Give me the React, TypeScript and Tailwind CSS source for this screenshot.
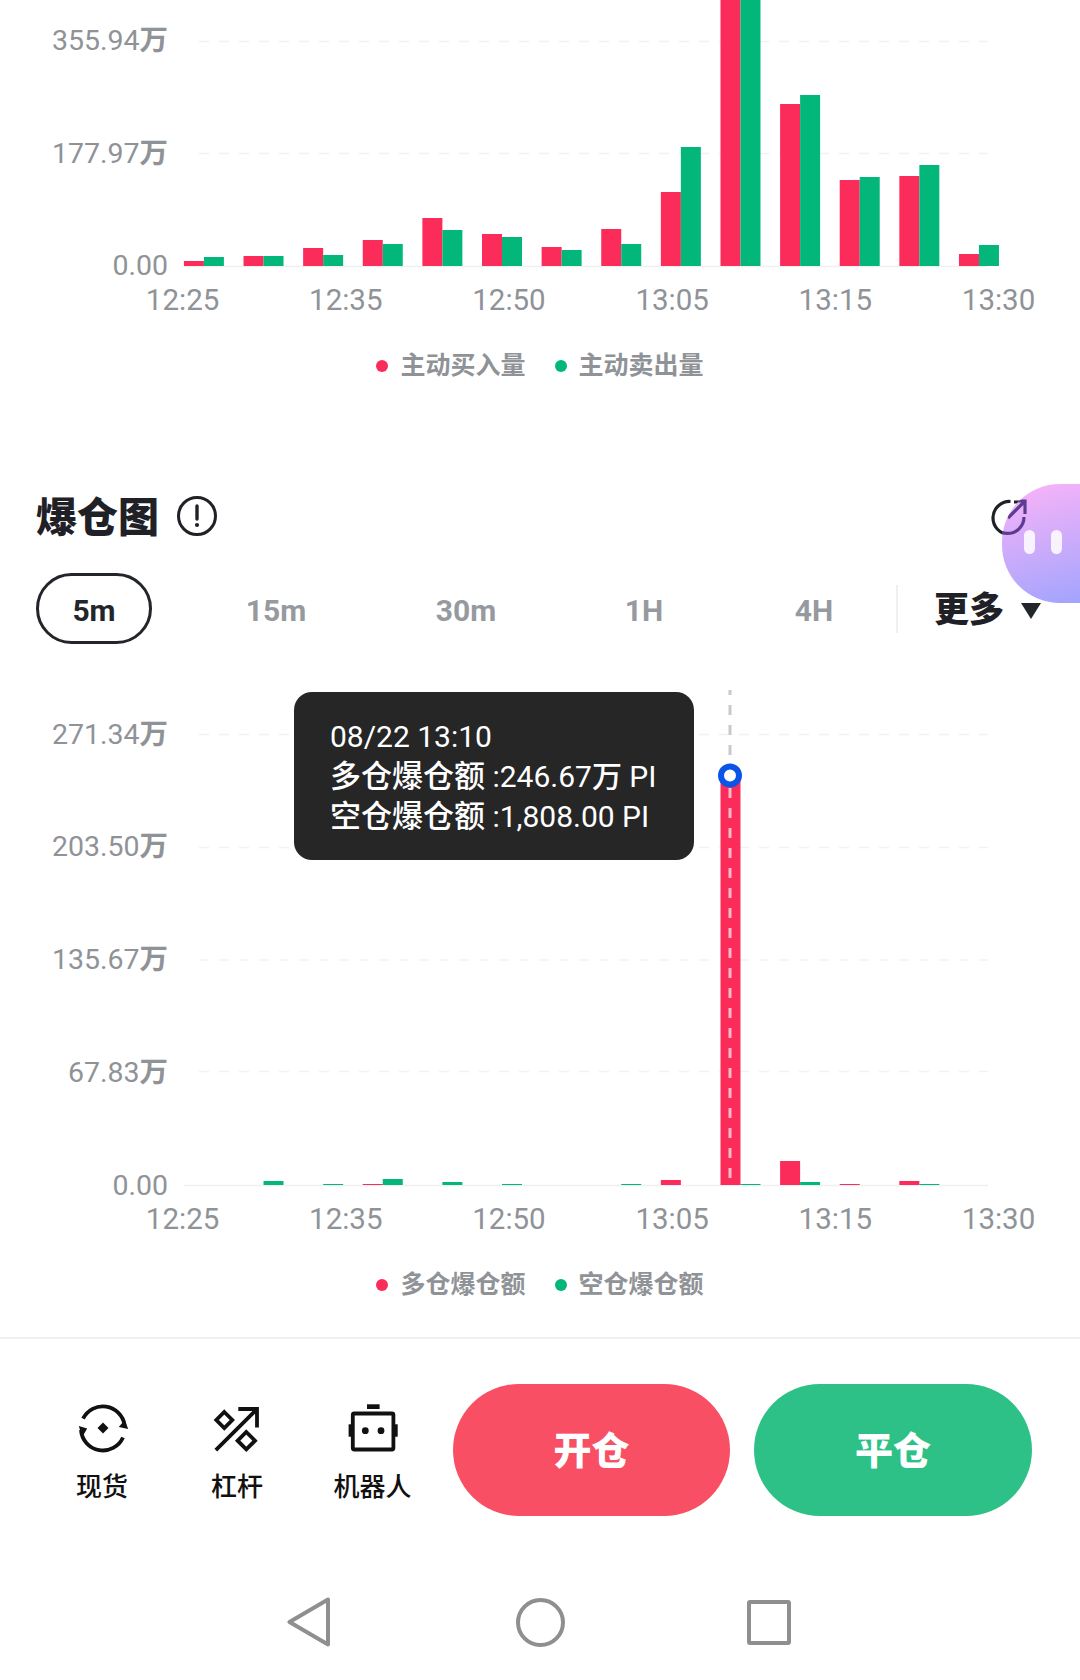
import { Fragment } from 'react';

const RED = '#fb2c5a';
const GREEN = '#03b77b';
const BAR_WIDTH = 20;
const BAR_STEP = 59.62;
const TIME_LABELS = ['12:25', '12:35', '12:50', '13:05', '13:15', '13:30'];

// bar heights in px: [buy, sell]
const VOLUME_BARS = [
  [5, 9], [10, 10], [18, 11], [26, 22], [48, 36], [32, 29], [19, 16],
  [37, 22], [74, 119], [270, 270], [162, 171], [86, 89], [90, 101], [12, 21],
];
const LIQ_BARS = [
  [0, 0], [0, 4], [0, 1], [1, 6], [0, 3], [0, 1], [0, 0],
  [0, 1], [5, 0], [405, 1], [24, 3], [1, 0], [4, 1], [0, 0],
];

const Bars = ({ data, base }: { data: number[][]; base: number }) => (
  <>
    {data.map(([buy, sell], i) => {
      const x = 183.9 + BAR_STEP * i;
      return (
        <Fragment key={i}>
          {buy > 0 && <rect x={x} y={base - buy} width={BAR_WIDTH} height={buy} fill={RED} />}
          {sell > 0 && <rect x={x + BAR_WIDTH} y={base - sell} width={BAR_WIDTH} height={sell} fill={GREEN} />}
        </Fragment>
      );
    })}
  </>
);

const GridLine = ({ y }: { y: number }) => (
  <line x1={199} x2={988} y1={y} y2={y} stroke="#f1f2f4" strokeWidth={1.5} strokeDasharray="10 10" />
);

const YLabel = ({ value, unit }: { value: string; unit?: string }) => (
  <div className="h-[32px] leading-[32px] text-[28.5px] text-right text-[#8f9397] whitespace-nowrap">
    {value}
    {unit && <span className="font-semibold">{unit}</span>}
  </div>
);

const TimeAxis = () => (
  <div className="flex pl-[101px] pt-[1px]">
    {TIME_LABELS.map((t) => (
      <div key={t} className="w-[163.2px] shrink-0 h-[32px] leading-[32px] text-center text-[29.5px] text-[#8f9397]">
        {t}
      </div>
    ))}
  </div>
);

const Legend = ({ buy, sell, className }: { buy: string; sell: string; className: string }) => (
  <div className={`flex justify-center gap-[29px] ${className}`}>
    <div className="flex items-center gap-[12px]">
      <span className="w-[12px] h-[12px] rounded-full bg-[#fb2c5a]" />
      <span className="text-[25px] leading-[32px] font-semibold text-[#8f9397]">{buy}</span>
    </div>
    <div className="flex items-center gap-[12px]">
      <span className="w-[12px] h-[12px] rounded-full bg-[#03b77b]" />
      <span className="text-[25px] leading-[32px] font-semibold text-[#8f9397]">{sell}</span>
    </div>
  </div>
);

const VolumeChart = () => (
  <div>
    <div className="flex h-[283px]">
      <div className="w-[168px] pt-[25px] flex flex-col gap-[80.5px] shrink-0">
        <YLabel value="355.94" unit="万" />
        <YLabel value="177.97" unit="万" />
        <YLabel value="0.00" />
      </div>
      <svg width={912} height={283} viewBox="168 0 912 283" className="shrink-0">
        <GridLine y={41.5} />
        <GridLine y={153.5} />
        <line x1={184} x2={988} y1={266.5} y2={266.5} stroke="#eef0f2" strokeWidth={1.5} />
        <Bars data={VOLUME_BARS} base={266} />
      </svg>
    </div>
    <TimeAxis />
    <Legend buy="主动买入量" sell="主动卖出量" className="mt-[34px]" />
  </div>
);

const LiquidationChart = () => (
  <div>
    <div className="relative flex h-[558px]">
      <div className="w-[168px] pt-[74.5px] flex flex-col gap-[80.75px] shrink-0">
        <YLabel value="271.34" unit="万" />
        <YLabel value="203.50" unit="万" />
        <YLabel value="135.67" unit="万" />
        <YLabel value="67.83" unit="万" />
        <YLabel value="0.00" />
      </div>
      <svg width={912} height={558} viewBox="168 644 912 558" className="shrink-0">
        <GridLine y={734.5} />
        <GridLine y={847.5} />
        <GridLine y={960} />
        <GridLine y={1071.5} />
        <line x1={184} x2={988} y1={1185.5} y2={1185.5} stroke="#eef0f2" strokeWidth={1.5} />
        <Bars data={LIQ_BARS} base={1185} />
        <line x1={730} x2={730} y1={690} y2={770} stroke="#c9c9c9" strokeWidth={3} strokeDasharray="10 10" strokeDashoffset={5} />
        <line x1={730} x2={730} y1={785} y2={1185} stroke="#f7b9c8" strokeWidth={3} strokeDasharray="10 10" strokeDashoffset={-3} />
        <circle cx={730} cy={775.5} r={9} fill="#fff" stroke="#0b55e6" strokeWidth={6} />
      </svg>
      {/* tooltip sits on top of the plot */}
      <div className="absolute left-[294px] top-[48px] w-[400px] h-[168px] rounded-[18px] bg-[#262626] pl-[36px] pt-[25px] text-[30px] leading-[40px] text-white whitespace-nowrap">
        <div>08/22 13:10</div>
        <div>
          <span className="text-[31px] font-medium">多仓爆仓额</span> :246.67<span className="font-medium">万</span> PI
        </div>
        <div>
          <span className="text-[31px] font-medium">空仓爆仓额</span> :1,808.00 PI
        </div>
      </div>
    </div>
    <TimeAxis />
    <Legend buy="多仓爆仓额" sell="空仓爆仓额" className="mt-[34px]" />
  </div>
);

const ShareIcon = ({ color, className }: { color: string; className: string }) => (
  <svg width={40} height={40} viewBox="0 0 40 40" className={className}>
    <path d="M20.5 3.5A16.5 16.5 0 1 0 36 20" fill="none" stroke={color} strokeWidth={3.2} />
    <path d="M20 21L36 5M24 4H37V17" fill="none" stroke={color} strokeWidth={3.2} />
  </svg>
);

const SpotIcon = () => (
  <svg width={70} height={50} viewBox="-11 0 70 50">
    <path d="M5.1 15.7A22 22 0 0 1 46.6 22" fill="none" stroke="#111" strokeWidth={3.8} />
    <path d="M50.2 26L40.8 24L46.8 17Z" fill="#111" />
    <path d="M45 34.5A22 22 0 0 1 3 27" fill="none" stroke="#111" strokeWidth={3.8} />
    <path d="M0.8 23L9.2 25.6L4.2 34Z" fill="#111" />
    <path d="M25 19.5L30.5 25L25 30.5L19.5 25Z" fill="#111" />
  </svg>
);

const LeverageIcon = () => (
  <svg width={70} height={50} viewBox="1.7 8 70 50">
    <path d="M15.5 55.2L56.7 14M38 14H56.7V32.5" fill="none" stroke="#111" strokeWidth={3.8} />
    <path d="M24 17L32 25L24 33L16 25Z" fill="none" stroke="#111" strokeWidth={3.8} />
    <path d="M46 37L54.7 45.7L46 54.4L37.3 45.7Z" fill="none" stroke="#111" strokeWidth={3.8} />
  </svg>
);

const RobotIcon = () => (
  <svg width={70} height={50} viewBox="337.7 1403 70 50">
    <rect x={366.7} y={1404.3} width={12.6} height={4.7} fill="#111" />
    <rect x={352.5} y={1413.5} width={40.6} height={36} rx={1.5} fill="none" stroke="#111" strokeWidth={3.8} />
    <rect x={348.3} y={1424.3} width={3.4} height={12.4} fill="#111" />
    <rect x={394} y={1424.3} width={3.4} height={12.4} fill="#111" />
    <circle cx={365} cy={1430.7} r={3.4} fill="#111" />
    <circle cx={380.7} cy={1430.7} r={3.4} fill="#111" />
  </svg>
);

const TradeLink = ({ label, className, children }: { label: string; className: string; children: React.ReactNode }) => (
  <div className={`flex flex-col items-center pt-[19px] ${className}`}>
    {children}
    <span className="mt-[18px] text-[26px] leading-[32px] font-medium text-[#111]">{label}</span>
  </div>
);

export default function App() {
  return (
    <div className="relative w-[1080px] h-[1680px] overflow-hidden bg-white font-['Roboto','Noto_Sans_CJK_SC',sans-serif]">
      <VolumeChart />

      <div className="mt-[111px] h-[48px] flex items-center pl-[36px] pr-[50px]">
        <h2 className="text-[41px] leading-[48px] font-black text-[#1f2126] translate-y-[1px]">爆仓图</h2>
        <svg width={42} height={42} viewBox="0 0 42 42" className="ml-[17px] -translate-y-[1px]">
          <circle cx={21} cy={21} r={18.5} fill="none" stroke="#1f2126" strokeWidth={3} />
          <path d="M21 11V24" stroke="#1f2126" strokeWidth={3.4} strokeLinecap="round" />
          <circle cx={21} cy={30} r={2.1} fill="#1f2126" />
        </svg>
        <ShareIcon color="#1f2126" className="ml-auto mt-[2px]" />
      </div>

      {/* interval tabs */}
      <div className="mt-[32px] h-[71px] flex items-center font-bold text-[30px] text-[#969a9f]">
        <div className="ml-[36px] w-[116px] h-[71px] rounded-full border-[3px] border-[#22252a] flex items-center justify-center text-[#22252a]">
          <span className="translate-y-[2px]">5m</span>
        </div>
        <div className="ml-[64px] w-[120px] text-center translate-y-[2px]">15m</div>
        <div className="ml-[70px] w-[120px] text-center translate-y-[2px]">30m</div>
        <div className="ml-[78px] w-[80px] text-center translate-y-[2px]">1H</div>
        <div className="ml-[90px] w-[80px] text-center translate-y-[2px]">4H</div>
        <div className="ml-[42px] w-[2px] h-[48px] bg-[#eeeff1]" />
        <div className="ml-[36px] text-[35px] leading-[48px] font-black text-[#1f2126] translate-y-[2px]">更多</div>
        <svg width={20} height={16} viewBox="0 0 20 16" className="ml-[17px] translate-y-[2px]">
          <path d="M0 0H20L10 16Z" fill="#22252a" />
        </svg>
      </div>

      <LiquidationChart />

      {/* bottom trade bar */}
      <div className="mt-[36px] border-t-2 border-[#f0f1f3] pt-[45px] pl-[35px] flex">
        <TradeLink label="现货" className="w-[134px]"><SpotIcon /></TradeLink>
        <TradeLink label="杠杆" className="w-[136px]"><LeverageIcon /></TradeLink>
        <TradeLink label="机器人" className="w-[135px]"><RobotIcon /></TradeLink>
        <button className="ml-[13px] w-[277px] h-[132px] rounded-full bg-[#f84f64] text-white text-[38px] font-black">
          <span className="inline-block translate-y-[1px]">开仓</span>
        </button>
        <button className="ml-[24px] w-[278px] h-[132px] rounded-full bg-[#2ec187] text-white text-[38px] font-black">
          <span className="inline-block translate-y-[1px]">平仓</span>
        </button>
      </div>

      {/* android nav */}
      <div className="mt-[81px] pl-[287px] flex items-center">
        <svg width={44} height={50} viewBox="0 0 44 50">
          <path d="M41 2.5V47.5L2.5 25Z" fill="none" stroke="#8f8f8f" strokeWidth={4} strokeLinejoin="round" />
        </svg>
        <div className="ml-[185px] w-[49px] h-[49px] rounded-full border-[4px] border-[#8f8f8f]" />
        <div className="ml-[182px] w-[44px] h-[45px] rounded-[3px] border-[4px] border-[#8f8f8f]" />
      </div>

      {/* floating assistant bubble, the share icon shows through it */}
      <div className="absolute right-0 top-[484px] w-[78px] h-[119px] rounded-l-[58px] overflow-hidden bg-[linear-gradient(165deg,#fbb4f8,#a2a4fd)] flex items-start pt-[46px] pl-[22px] gap-[16px]">
        <ShareIcon color="#5c3b92" className="absolute left-[-14px] top-[13px]" />
        <span className="w-[11px] h-[24px] rounded-full bg-white/85" />
        <span className="w-[11px] h-[24px] rounded-full bg-white/85" />
      </div>
    </div>
  );
}
